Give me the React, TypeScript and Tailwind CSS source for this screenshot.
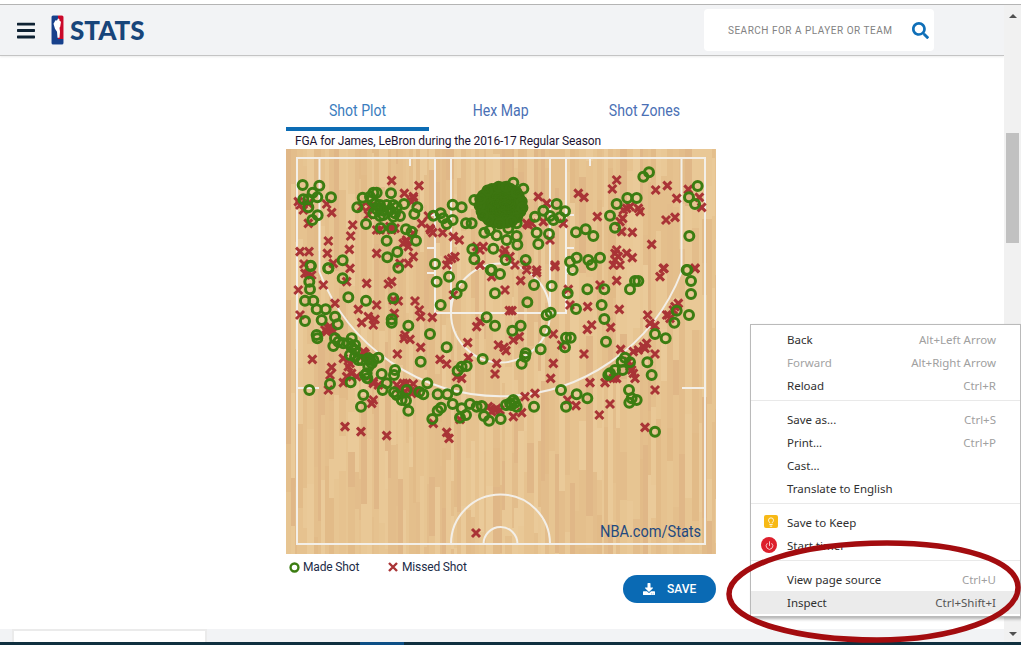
import { FaBars, FaDownload, FaSearch } from "react-icons/fa";
import { Lightbulb, Power } from "lucide-react";

type Pt = [number, number];

// shot positions as read off the picture, in two crops of the court
const topMade: Pt[] = [[68,285],[118,287],[98,308],[112,322],[70,328],[85,328],[153,322],[85,352],[113,376],[97,390],[248,323],[280,308],[290,308],[333,310],[232,352],[275,330],[300,345],[320,345],[340,345],[372,342],[412,352],[403,372],[360,378],[340,380],[310,375],[280,370],[258,402],[302,414],[335,414],[378,418],[395,425],[408,452],[320,452],[352,486],[322,502],[188,511],[145,535],[92,527],[355,533],[465,522],[460,377],[482,370],[490,385],[500,402],[518,390],[518,344],[545,352],[583,330],[558,400],[575,400],[700,278],[730,296],[790,362],[830,342],[855,364],[810,378],[820,390],[840,382],[770,428],[807,432],[775,462],[888,427],[917,418],[940,438],[990,377],[1005,413],[1010,342],[1042,324],[1070,324],[1090,260],[1107,247],[1253,288],[1227,322],[1245,342],[1228,438],[1220,540],[613,428],[650,436],[680,450],[710,438],[712,464],[640,476],[577,478],[583,508],[677,510],[737,510],[632,540],[870,515],[890,503],[925,510],[960,503],[935,525],[710,400],[685,415],[630,420],[765,380],[300,355],[310,362],[330,360],[350,352],[290,358],[300,378],[345,370],[270,320],[285,340]];
const topMissed: Pt[] = [[335,272],[417,287],[373,310],[400,325],[55,335],[140,342],[155,368],[218,405],[212,438],[145,453],[208,478],[142,490],[60,485],[87,485],[72,522],[160,520],[290,490],[378,455],[400,500],[360,520],[385,520],[425,400],[452,420],[488,428],[520,440],[538,450],[445,378],[505,510],[525,500],[590,470],[610,470],[675,480],[690,500],[740,400],[790,395],[775,320],[800,340],[810,450],[850,400],[825,525],[895,310],[912,322],[997,297],[1010,270],[1127,300],[1162,287],[1190,325],[952,380],[1028,385],[1040,355],[1080,365],[1025,425],[1057,427],[1158,390],[1185,382],[1115,463],[1010,480],[1057,503],[1005,510],[1225,298],[1258,322],[1265,352],[1152,535],[1245,535],[85,400],[245,350],[265,375],[300,420],[335,420],[290,420],[270,350],[400,430],[600,525],[705,525],[740,525],[770,540],[1040,490],[380,450],[370,460],[385,470],[400,320],[395,335],[745,405],[755,400],[1030,360],[1050,350],[1075,355],[1005,490],[1015,500],[330,410],[345,415],[450,415],[458,428],[600,480],[670,490],[515,505],[1020,395],[70,360],[85,340],[60,345]];
const lowMade: Pt[] = [[92,18],[145,25],[188,55],[88,65],[90,88],[75,122],[100,122],[110,148],[137,148],[125,180],[165,170],[75,183],[173,193],[205,112],[258,122],[340,115],[335,178],[335,188],[385,197],[450,222],[110,225],[112,235],[160,258],[165,235],[175,245],[215,235],[215,262],[225,270],[210,285],[235,300],[270,300],[295,293],[275,310],[260,340],[262,355],[305,342],[345,330],[342,345],[320,370],[150,372],[212,367],[308,390],[88,390],[250,405],[243,440],[342,397],[350,405],[380,390],[365,420],[378,422],[385,452],[418,396],[430,403],[442,370],[473,403],[502,403],[530,390],[518,432],[545,445],[570,432],[590,440],[605,438],[483,443],[473,452],[457,477],[540,473],[558,465],[612,468],[627,482],[662,477],[678,435],[700,420],[695,435],[710,440],[762,440],[843,390],[890,403],[922,415],[858,440],[1047,390],[1055,415],[1070,420],[1048,428],[1125,515],[422,305],[500,262],[533,332],[545,320],[560,318],[608,297],[725,311],[737,280],[735,290],[782,268],[620,172],[645,197],[697,212],[722,197],[795,212],[800,165],[812,158],[742,127],[645,100],[660,42],[635,30],[507,50],[470,65],[530,100],[545,78],[482,135],[762,75],[815,78],[863,100],[878,30],[922,88],[973,88],[965,135],[888,147],[973,177],[1050,88],[1065,63],[1075,63],[1222,30],[1233,63],[1233,102],[1190,152],[1183,188],[1227,165],[1125,222],[1157,235],[978,245],[855,262],[858,233],[872,233],[1035,293],[1050,307],[1025,305],[1028,330],[1005,330],[990,340],[985,345],[1102,307],[1115,345],[205,250],[225,255],[190,250],[225,290],[245,300],[265,320],[280,300],[265,295],[255,345],[690,430],[705,428]];
const lowMissed: Pt[] = [[55,90],[60,165],[85,40],[130,75],[165,130],[210,25],[200,65],[260,70],[325,72],[335,65],[235,148],[290,135],[265,170],[285,178],[245,188],[280,195],[343,160],[355,123],[405,123],[418,150],[422,170],[457,172],[375,225],[390,238],[372,235],[422,262],[352,282],[97,298],[155,322],[150,345],[145,205],[155,210],[140,215],[190,295],[205,320],[215,340],[190,368],[145,390],[195,500],[243,515],[320,527],[500,517],[507,535],[480,298],[500,312],[563,248],[565,293],[530,350],[545,355],[655,255],[678,272],[650,310],[645,342],[675,90],[688,152],[696,152],[590,200],[600,185],[700,240],[718,230],[672,262],[820,222],[845,255],[820,310],[812,355],[912,282],[922,208],[935,195],[923,140],[992,202],[1018,148],[1010,62],[1103,165],[1125,197],[1160,165],[1195,130],[1140,50],[1150,25],[1022,268],[1060,275],[1090,260],[1100,250],[1125,282],[1055,330],[1065,355],[1010,355],[930,368],[975,368],[1125,390],[990,432],[958,465],[1095,502],[863,420],[888,437],[765,400],[735,410],[645,450],[625,440],[700,470],[725,458],[540,478],[460,490],[380,370],[400,372],[395,400],[250,275],[260,290],[280,370],[520,105],[635,50],[722,62],[770,38],[825,20],[865,88],[870,135],[1245,25],[1020,15],[1000,15],[960,75],[340,120],[200,350],[375,395],[500,15],[600,15],[740,30],[150,200],[135,210],[160,215],[370,370],[390,380],[410,395],[240,290],[255,280],[210,310],[230,350],[650,445],[660,450],[635,455],[1050,320],[1060,340],[1045,305],[1095,265],[1075,270],[1165,165],[1185,140],[1110,190],[1000,355],[75,40],[95,45],[280,365],[295,375],[360,385],[350,375],[1170,175],[1180,150],[275,430],[280,420]];

const fromTop = ([x, y]: Pt): Pt => [280 + x / 3, 90 + y / 3];
const fromLow = ([x, y]: Pt): Pt => [280 + x / 3, 260 + y / 3];

const made = [...topMade.map(fromTop), ...lowMade.map(fromLow)];
const missed: Pt[] = [...topMissed.map(fromTop), ...lowMissed.map(fromLow), [476, 533]];

const woodColors = ["#e7c592", "#e4bf8c", "#e2bb88", "#eaca99", "#e6c28f", "#e3bd8b", "#e9c896", "#e0b787"];

function makePlanks() {
  let seed = 7;
  const next = () => {
    seed = (seed * 1103515245 + 12345) % 2147483648;
    return seed / 2147483648;
  };
  const planks: { x: number; y: number; w: number; h: number; fill: string }[] = [];
  for (let x = 286; x < 716; ) {
    const w = 2 + Math.floor(next() * 6);
    for (let y = 149 - Math.floor(next() * 60); y < 554; ) {
      const h = 30 + Math.floor(next() * 90);
      planks.push({ x, y, w, h, fill: woodColors[Math.floor(next() * woodColors.length)] });
      y += h;
    }
    x += w;
  }
  return planks;
}

const planks = makePlanks();

function blobDots() {
  const dots: Pt[] = [];
  for (let i = 0; i < 170; i++) {
    const a = i * 2.39996;
    const r = Math.sqrt(i / 170);
    dots.push([501 + Math.cos(a) * r * 22, 205 + Math.sin(a) * r * 19]);
  }
  return dots;
}

function ShotChart() {
  return (
    <svg viewBox="286 149 430 405" className="block w-full h-full">
      {planks.map((p, i) => (
        <rect key={i} x={p.x} y={p.y} width={p.w} height={p.h} fill={p.fill} />
      ))}
      <g fill="none" stroke="#f3efe8" strokeWidth="2">
        <rect x="297" y="158" width="408" height="386" />
        <path d="M319.5 158V272A194 194 0 0 0 681.5 272V158" />
        <path d="M435 158V313H566V158M451 158V313M550 158V313" />
        <circle cx="500.5" cy="313" r="49.5" />
        <path d="M410 158v8M590 158v8" />
        <path d="M427 215h8M566 215h8M427 248h8M566 248h8M427 273h8M566 273h8" />
        <path d="M297 388h22M682 388h23" />
        <path d="M451 544A49.5 49.5 0 0 1 550 544M483.5 544A17 17 0 0 1 517.5 544" />
      </g>
      <g stroke="#a93436" strokeWidth="3" fill="none">
        {missed.map(([x, y], i) => (
          <path key={i} d={`M${x - 4} ${y - 4}L${x + 4} ${y + 4}M${x + 4} ${y - 4}L${x - 4} ${y + 4}`} />
        ))}
      </g>
      <g fill="none" stroke="#3c7d12" strokeWidth="3">
        {made.map(([x, y], i) => (
          <circle key={i} cx={x} cy={y} r="4.5" />
        ))}
      </g>
      <ellipse cx="500" cy="205" rx="23" ry="20" fill="#3c7510" />
      <g fill="none" stroke="#3c7510" strokeWidth="3">
        {blobDots().map(([x, y], i) => (
          <circle key={i} cx={x} cy={y} r="4.5" />
        ))}
      </g>
    </svg>
  );
}

function NbaLogo() {
  return (
    <svg viewBox="0 0 13 30" className="w-[13px] h-[30px] shrink-0">
      <rect x="0" y="0" width="13" height="30" rx="2" fill="#fff" />
      <path d="M2 .5H7V29.500H2A1.500 1.500 0 0 1 .5 28V2A1.500 1.500 0 0 1 2 .5Z" fill="#17408b" />
      <path d="M7 .5H11A1.500 1.500 0 0 1 12.500 2V24H7Z" fill="#c9082a" />
      <path d="M7 3.500c1.300 0 1.800 1 1.500 2.300l1.500 1-.8 5-.7 1 .5 4-.5 6H6.500l-.5-6-2-3-1.500-5 2-3.500L6 5.500Z" fill="#fff" />
      <path d="M7 24H12.500V28A1.500 1.500 0 0 1 11 29.500H7Z" fill="#17408b" />
    </svg>
  );
}

function Header() {
  return (
    <header className="h-[51px] shrink-0 flex items-center justify-between bg-[#f2f3f5] border-b border-[#c4c4c4] shadow-[0_1px_2px_rgba(0,0,0,0.08)]">
      <div className="flex items-center pl-[17px]">
        <FaBars className="text-[#0f2233] text-[18px] w-[18px] h-[21px]" />
        <div className="ml-4 flex items-center gap-[6px]">
          <NbaLogo />
          <span className="text-[26px] leading-none font-black text-[#17457a] font-['Lato',sans-serif]">STATS</span>
        </div>
      </div>
      <div className="mr-[70px] w-[230px] h-[42px] bg-white rounded-sm flex items-center pl-6 pr-[5px] justify-between">
        <span className="text-[10px] tracking-[0.5px] text-[#828282] font-['Roboto',sans-serif] whitespace-nowrap">SEARCH FOR A PLAYER OR TEAM</span>
        <FaSearch className="text-[#0f6fb8] w-[17px] h-[17px]" />
      </div>
    </header>
  );
}

function Tab({ label, active }: { label: string; active?: boolean }) {
  return (
    <div className={`h-[36px] flex items-center justify-center border-b-4 text-[16px] ${active ? "border-[#0c6cb4] text-[#3a7dbe]" : "border-transparent text-[#4a70b5]"}`}>
      <span className="inline-block scale-x-[0.88] whitespace-nowrap">{label}</span>
    </div>
  );
}

function ShotPanel() {
  return (
    <section className="w-[430px] ml-[286px] font-['Roboto',sans-serif]">
      <div className="grid grid-cols-3 mt-[39px]">
        <Tab label="Shot Plot" active />
        <Tab label="Hex Map" />
        <Tab label="Shot Zones" />
      </div>
      <p className="h-[18px] pl-[9px] text-[12px] leading-[21px] text-[#1c1230] tracking-[-0.12px] whitespace-nowrap">
        FGA for James, LeBron during the 2016-17 Regular Season
      </p>
      <div className="relative h-[405px]">
        <ShotChart />
        <span className="absolute right-[15px] bottom-[12px] text-[16px] leading-5 text-[#1f4a80] inline-block scale-x-[0.91] origin-right">NBA.com/Stats</span>
      </div>
      <div className="flex items-center mt-[5px] pl-[3px] text-[12px] text-[#1c2c48] h-4">
        <svg viewBox="0 0 12 12" className="w-[11px] h-[11px] mr-[3px]">
          <circle cx="6" cy="6" r="4.300" fill="none" stroke="#3c7d12" strokeWidth="2.600" />
        </svg>
        <span className="w-[85px] tracking-[-0.15px]">Made Shot</span>
        <svg viewBox="0 0 10 10" className="w-[10px] h-[10px] mr-[4px]">
          <path d="M1 1L9 9M9 1L1 9" stroke="#a93436" strokeWidth="2.400" />
        </svg>
        <span className="tracking-[-0.15px]">Missed Shot</span>
      </div>
      <div className="flex justify-end">
        <button className="w-[93px] h-[28px] rounded-full bg-[#0a6ab4] text-white text-[12px] font-medium flex items-center pl-[20px] gap-[12px]">
          <FaDownload className="w-3 h-3" />
          SAVE
        </button>
      </div>
    </section>
  );
}

type MenuRow = { label: string; keys?: string; disabled?: boolean; icon?: "keep" | "timer"; active?: boolean };

const menuGroups: { rows: MenuRow[] }[] = [
  { rows: [{ label: "Back", keys: "Alt+Left Arrow" }, { label: "Forward", keys: "Alt+Right Arrow", disabled: true }, { label: "Reload", keys: "Ctrl+R" }] },
  { rows: [{ label: "Save as...", keys: "Ctrl+S" }, { label: "Print...", keys: "Ctrl+P" }, { label: "Cast..." }, { label: "Translate to English" }] },
  { rows: [{ label: "Save to Keep", icon: "keep" }, { label: "Start timer", icon: "timer" }] },
  { rows: [{ label: "View page source", keys: "Ctrl+U" }, { label: "Inspect", keys: "Ctrl+Shift+I", active: true }] },
];

function ContextMenu() {
  return (
    <div className="absolute left-[750px] top-[324px] w-[271px] h-[293px] bg-white border border-[#bababa] shadow-[2px_2px_3px_rgba(0,0,0,0.3)] pt-[3px] font-['Noto_Sans',sans-serif] text-[11.500px] text-[#303030]">
      {menuGroups.map((group, g) => (
        <div key={g} className={g > 0 ? "border-t border-[#e9e9e9] mt-[3px] pt-[7px]" : ""}>
          {group.rows.map((row) => (
            <div key={row.label} className={`relative h-[23px] flex items-center justify-between pl-9 pr-6 ${row.active ? "bg-[#ebebeb]" : ""}`}>
              {row.icon === "keep" && (
                <span className="absolute left-[13px] top-1 w-[14px] h-[13px] rounded-[2px] bg-[#f7b916] flex items-center justify-center">
                  <Lightbulb className="w-[10px] h-[10px] text-white" />
                </span>
              )}
              {row.icon === "timer" && (
                <span className="absolute left-[10px] top-[3px] w-4 h-4 rounded-full bg-[#dd1f2c] flex items-center justify-center">
                  <Power className="w-[9px] h-[9px] text-white" />
                </span>
              )}
              <span className={row.disabled ? "text-[#a3a3a3]" : ""}>{row.label}</span>
              {row.keys && <span className={row.active ? "text-[#555]" : "text-[#a0a0a0]"}>{row.keys}</span>}
            </div>
          ))}
        </div>
      ))}
    </div>
  );
}

function Scrollbar() {
  return (
    <div className="w-[17px] shrink-0 bg-[#f1f1f1] flex flex-col items-center">
      <div className="h-[17px] flex items-center justify-center mt-[2px]">
        <div className="border-x-[4px] border-x-transparent border-b-[4px] border-b-[#505050]" />
      </div>
      <div className="w-[13px] h-[110px] bg-[#c1c1c1] mt-[109px]" />
      <div className="flex-1" />
      <div className="h-[17px] flex items-center justify-center">
        <div className="border-x-[4px] border-x-transparent border-t-[4px] border-t-[#505050]" />
      </div>
    </div>
  );
}

export default function App() {
  return (
    <div className="relative w-[1021px] h-[645px] overflow-hidden bg-white flex flex-col">
      <div className="h-1 bg-white shrink-0" />
      <div className="flex-1 min-h-0 flex border-t border-[#b5b5b5]">
        <div className="flex-1 min-w-0 flex flex-col">
          <Header />
          <main className="flex-1 min-h-0">
            <ShotPanel />
          </main>
          <div className="h-[13px] shrink-0 bg-[#f2f3f5] pl-3">
            <div className="w-[195px] h-full bg-white border-x-2 border-t-2 border-[#ebebeb]" />
          </div>
        </div>
        <Scrollbar />
      </div>
      <div className="h-[3px] shrink-0 bg-[#10303f] pl-[360px]">
        <div className="w-11 h-full bg-[#0d4f86]" />
      </div>
      <ContextMenu />
      <svg className="absolute left-0 top-0 w-[1021px] h-[645px] pointer-events-none" viewBox="0 0 1021 645">
        <path d="M887 543C960 543 1017 560 1018 587C1019 618 950 640 877 640C800 640 729 622 729 594C729 566 800 543 887 543Z" fill="none" stroke="#a30c0f" strokeWidth="5.500" />
      </svg>
    </div>
  );
}
